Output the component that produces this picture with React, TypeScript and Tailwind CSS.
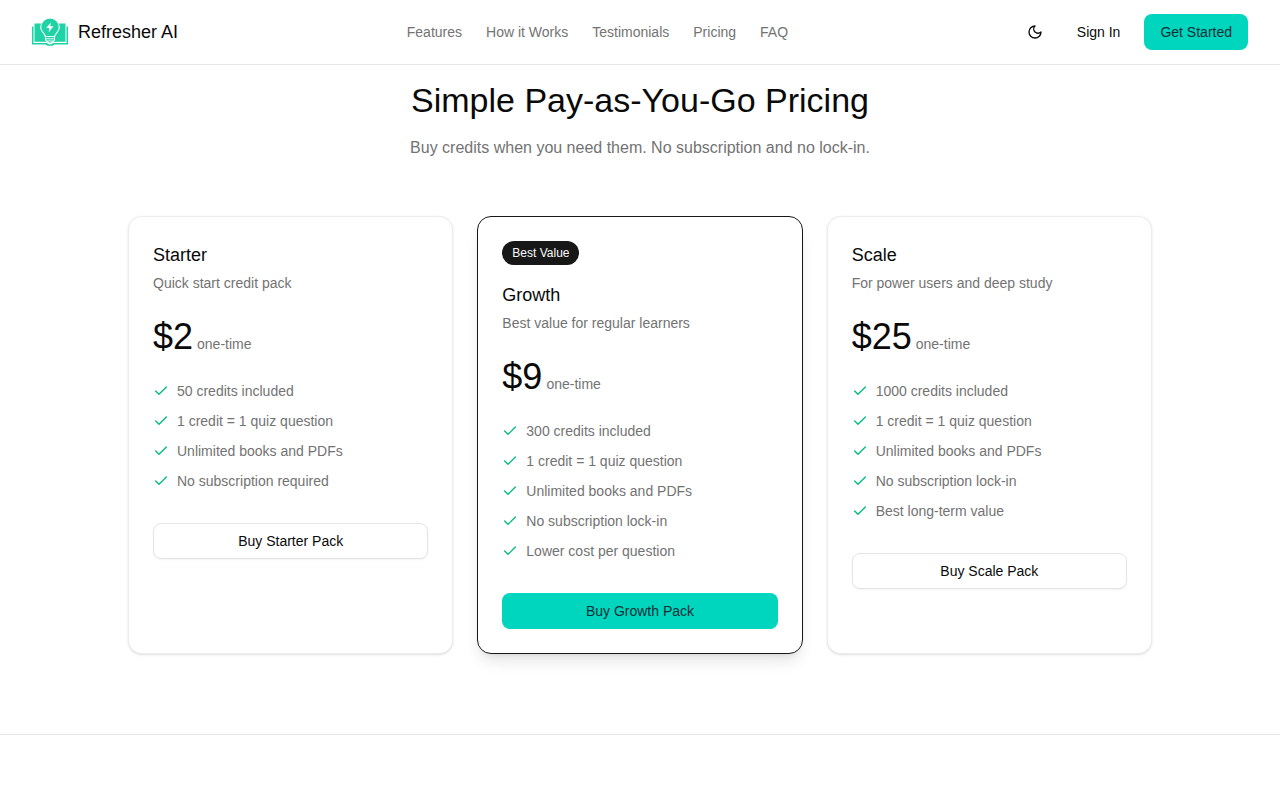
import { Check } from "lucide-react"
import clsx from "clsx"

const navLinks = [
  { label: "Features", href: "#features" },
  { label: "How it Works", href: "#how-it-works" },
  { label: "Testimonials", href: "#testimonials" },
  { label: "Pricing", href: "#pricing" },
  { label: "FAQ", href: "#faq" },
]

const plans = [
  {
    name: "Starter",
    description: "Quick start credit pack",
    price: "$2",
    features: [
      "50 credits included",
      "1 credit = 1 quiz question",
      "Unlimited books and PDFs",
      "No subscription required",
    ],
    cta: "Buy Starter Pack",
  },
  {
    name: "Growth",
    description: "Best value for regular learners",
    price: "$9",
    features: [
      "300 credits included",
      "1 credit = 1 quiz question",
      "Unlimited books and PDFs",
      "No subscription lock-in",
      "Lower cost per question",
    ],
    cta: "Buy Growth Pack",
    badge: "Best Value",
  },
  {
    name: "Scale",
    description: "For power users and deep study",
    price: "$25",
    features: [
      "1000 credits included",
      "1 credit = 1 quiz question",
      "Unlimited books and PDFs",
      "No subscription lock-in",
      "Best long-term value",
    ],
    cta: "Buy Scale Pack",
  },
]

function Logo() {
  return (
    <svg width="36" height="28" viewBox="0 0 36 28" fill="none" aria-hidden="true">
      {/* cover */}
      <path d="M0 8.500h1.500V25H12c2.500 0 4 .5 4.800 1.300h2.400C20 25.500 21.500 25 24 25h10.500V8.500H36v18H24.500c-2 0-3 .3-4 1.300h-5c-1-1-2-1.300-4-1.300H0z" fill="#1fd3a6" />
      {/* pages */}
      <path d="M2.500 5.500H10c4 0 6.500 1 8 3 1.500-2 4-3 8-3h7.500v18.300H25c-3.500 0-5.500.7-7 2.200-1.500-1.500-3.500-2.200-7-2.200H2.500z" fill="#1fd3a6" />
      {/* bulb */}
      <path
        d="M18 0a9.300 9.300 0 0 0-9.300 9.300c0 4.700 4.300 6 4.800 9.700v2.500c0 1.500 1 2 2 2.500l2.500 1.500 2.500-1.500c1-.5 2-1 2-2.500V19c.5-3.700 4.800-5 4.800-9.700A9.300 9.300 0 0 0 18 0z"
        fill="#1fd3a6"
        stroke="#fff"
        strokeWidth="1.100"
      />
      <path d="M13.500 18.500h9M14 20.800h8M15 23h6" stroke="#fff" strokeWidth="0.900" />
      <path d="m18.800 4.500-4.600 5.500h3.100l-.6 4.300 4.800-6h-3.200z" fill="#fff" />
    </svg>
  )
}

function MoonIcon() {
  return (
    <svg
      width="16"
      height="16"
      viewBox="0 0 24 24"
      fill="none"
      stroke="currentColor"
      strokeWidth="2"
      strokeLinecap="round"
      strokeLinejoin="round"
      aria-hidden="true"
    >
      <path d="M12 3a6 6 0 0 0 9 9 9 9 0 1 1-9-9Z" />
    </svg>
  )
}

export default function App() {
  return (
    <div className="min-h-screen bg-white font-['Liberation_Sans',Arial,sans-serif] text-neutral-950">
      <header className="border-b border-neutral-200 bg-white">
        <div className="flex h-16 items-center justify-between px-8">
          <a href="/" className="flex items-center gap-2.5">
            <Logo />
            <span className="text-lg">Refresher AI</span>
          </a>

          <nav className="flex items-center gap-6 text-sm text-neutral-500">
            {navLinks.map((link) => (
              <a key={link.href} href={link.href} className="hover:text-neutral-950">
                {link.label}
              </a>
            ))}
          </nav>

          <div className="flex items-center gap-2 text-sm">
            <button type="button" aria-label="Toggle theme" className="flex size-9 items-center justify-center rounded-lg">
              <MoonIcon />
            </button>
            <a href="/sign-in" className="flex h-9 items-center rounded-lg px-4">
              Sign In
            </a>
            <a href="/sign-up" className="flex h-9 items-center rounded-lg bg-[#00d5be] px-4 text-[#0f2f36]">
              Get Started
            </a>
          </div>
        </div>
      </header>

      <main>
        <section id="pricing" className="border-b border-neutral-200 px-8 pt-[15px] pb-20">
          <div className="mx-auto max-w-5xl">
            <div className="mb-14 text-center">
              <h2 className="text-[34px] leading-10">Simple Pay-as-You-Go Pricing</h2>
              <p className="mt-4 text-base text-neutral-500">
                Buy credits when you need them. No subscription and no lock-in.
              </p>
            </div>

            <div className="grid grid-cols-3 gap-6">
              {plans.map((plan) => (
                <div
                  key={plan.name}
                  className={clsx(
                    "rounded-[14px] border bg-white p-6",
                    plan.badge ? "border-neutral-900 shadow-lg" : "border-neutral-200/70 shadow-sm"
                  )}
                >
                  {plan.badge && (
                    <span className="mb-4 flex h-6 w-fit items-center rounded-full bg-neutral-900 px-2.5 text-xs text-neutral-50">
                      {plan.badge}
                    </span>
                  )}
                  <h3 className="text-lg leading-7">{plan.name}</h3>
                  <p className="mt-1 text-sm text-neutral-500">{plan.description}</p>
                  <p className="mt-6 flex items-baseline gap-1">
                    <span className="text-4xl">{plan.price}</span>
                    <span className="text-sm text-neutral-500">one-time</span>
                  </p>
                  <ul className="mt-6 space-y-2.5 text-sm text-neutral-500">
                    {plan.features.map((feature) => (
                      <li key={feature} className="flex items-start gap-2">
                        <Check className="mt-0.5 size-4 shrink-0 text-emerald-500" />
                        {feature}
                      </li>
                    ))}
                  </ul>
                  <button
                    type="button"
                    className={clsx(
                      "mt-8 h-9 w-full rounded-lg text-sm",
                      plan.badge ? "bg-[#00d5be] text-[#0f2f36]" : "border border-neutral-200 bg-white shadow-xs"
                    )}
                  >
                    {plan.cta}
                  </button>
                </div>
              ))}
            </div>
          </div>
        </section>
      </main>
    </div>
  )
}
